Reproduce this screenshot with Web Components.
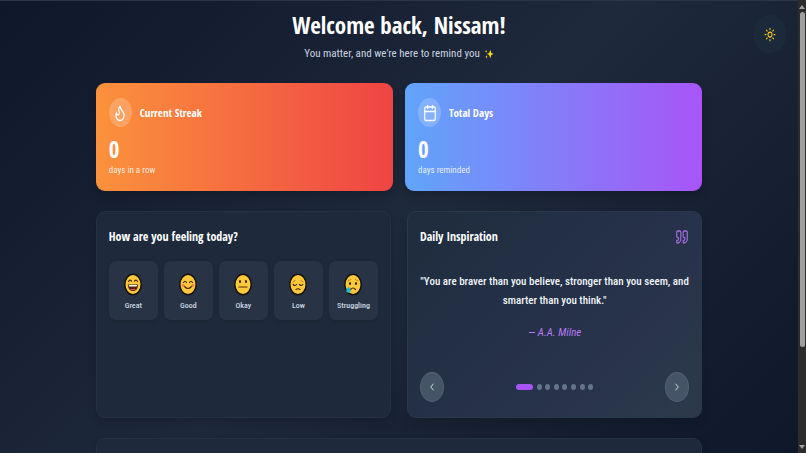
<!DOCTYPE html>
<html lang="en">
<head>
<meta charset="utf-8">
<title>Welcome back</title>
<style>
  :root {
    --font-heading: "Open Sans Condensed", "Roboto Condensed", Lato, sans-serif;
    --font-body: "Roboto Condensed", Lato, sans-serif;
  }

  body {
    margin: 0;
    background: #0f172a;
    color: #fff;
    font-family: var(--font-body);
  }
</style>
</head>
<body>

<app-shell>
  <theme-toggle></theme-toggle>
  <page-header heading="Welcome back, Nissam!">You matter, and we're here to remind you</page-header>
  <stat-row>
    <stat-card icon="flame" heading="Current Streak" value="0" from="#fb923c" to="#ef4444">days in a row</stat-card>
    <stat-card icon="calendar" heading="Total Days" value="0" from="#60a5fa" to="#a855f7">days reminded</stat-card>
  </stat-row>
  <panel-row>
    <glass-panel heading="How are you feeling today?">
      <mood-picker>
        <mood-button mood="great">Great</mood-button>
        <mood-button mood="good">Good</mood-button>
        <mood-button mood="okay">Okay</mood-button>
        <mood-button mood="low">Low</mood-button>
        <mood-button mood="struggling">Struggling</mood-button>
      </mood-picker>
    </glass-panel>
    <glass-panel heading="Daily Inspiration" tone="bright">
      <ui-icon slot="action" name="quote"></ui-icon>
      <quote-carousel author="A.A. Milne" count="8">"You are braver than you believe, stronger than you seem, and smarter than you think."</quote-carousel>
    </glass-panel>
  </panel-row>
  <glass-panel></glass-panel>
</app-shell>

<script>
const ICONS = {
  flame: '<path d="M8.5 14.5A2.5 2.5 0 0 0 11 12c0-1.38-.5-2-1-3-1.072-2.143-.224-4.054 2-6 .5 2.5 2 4.9 4 6.5 2 1.6 3 3.5 3 5.5a7 7 0 1 1-14 0c0-1.153.433-2.294 1-3a2.5 2.5 0 0 0 2.5 2.5z"/>',
  calendar: '<path d="M8 2v4M16 2v4M3 10h18"/><rect x="3" y="4" width="18" height="18" rx="2"/>',
  quote: '<path d="M16 3a2 2 0 0 0-2 2v6a2 2 0 0 0 2 2 1 1 0 0 1 1 1v1a2 2 0 0 1-2 2 1 1 0 0 0-1 1v2a1 1 0 0 0 1 1 6 6 0 0 0 6-6V5a2 2 0 0 0-2-2z"/><path d="M5 3a2 2 0 0 0-2 2v6a2 2 0 0 0 2 2 1 1 0 0 1 1 1v1a2 2 0 0 1-2 2 1 1 0 0 0-1 1v2a1 1 0 0 0 1 1 6 6 0 0 0 6-6V5a2 2 0 0 0-2-2z"/>',
  sun: '<circle cx="12" cy="12" r="4"/><path d="M12 2v2M12 20v2M4.93 4.93l1.41 1.41M17.66 17.66l1.41 1.41M2 12h2M20 12h2M6.34 17.66l-1.41 1.41M19.07 4.93l-1.41 1.41"/>',
  left: '<path d="m15 18-6-6 6-6"/>',
  right: '<path d="m9 18 6-6-6-6"/>',
  sparkles: '<g fill="#fadc15" stroke="none"><path d="M15 2l2.600 7.400L23 12l-5.400 2.600L15 22l-2.600-7.400L7 12l5.400-2.600z"/><path d="M5 2l.9 2.600L8 5.500l-2.100.9L5 9l-.9-2.600L2 5.500l2.100-.9z"/><path d="M6 15l1 3 2 1-2 1-1 3-1-3-2-1 2-1z"/></g>'
};

const FACES = {
  great: '<path d="M4.500 8.500q1.500-2.500 3-.3M10.500 8.200q1.500-2.200 3 .3" /><path d="M4.500 12h9q-.5 5.500-4.500 5.500T4.500 12z" fill="#5b1d12"/><path d="M5.500 12.800h7" stroke="#fff" stroke-width="1.500"/><path d="M7 16.500h4" stroke="#ef5350"/>',
  good: '<path d="M4.500 9.500q1.500-2.500 3 0M10.500 9.500q1.500-2.500 3 0M5.500 13.500q3.500 4 7 0"/><g fill="#f97355" stroke="none"><ellipse cx="4.200" cy="12.500" rx="1.600" ry="1.300"/><ellipse cx="13.800" cy="12.500" rx="1.600" ry="1.300"/></g>',
  okay: '<g fill="#2b1a0b" stroke="none"><ellipse cx="6" cy="8.500" rx="1" ry="1.500"/><ellipse cx="12" cy="8.500" rx="1" ry="1.500"/></g><path d="M5 14h8"/>',
  low: '<path d="M3.800 9l2.500-1.500M14.200 9l-2.500-1.500" stroke="#b86b12" stroke-width=".8"/><path d="M4.200 11.500q1.700 2 3.300 0M10.500 11.500q1.700 2 3.300 0M7 16.500q2-1.500 4 0"/>',
  struggling: '<path d="M4 8l2.500-1.500M14 8l-2.500-1.500" stroke="#b86b12" stroke-width=".8"/><g fill="#2b1a0b" stroke="none"><ellipse cx="6" cy="10.500" rx="1" ry="1.500"/><ellipse cx="12" cy="10.500" rx="1" ry="1.500"/></g><path d="M6.500 16.500q2.500-3 5 0"/><path d="M4.500 13.500q3.500 4 1.500 5.800-1.800 1.200-3.500-.3-1.300-1.500 2-5.500z" fill="#22b8cf" stroke="none"/>'
};

class BaseElement extends HTMLElement {
  connectedCallback() {
    if (this.shadowRoot) {
      return;
    }
    const root = this.attachShadow({ mode: 'open' });
    const template = document.createElement('template');
    template.innerHTML = `<style>* { box-sizing: border-box; }</style>${this.render()}`;
    root.appendChild(template.content.cloneNode(true));
  }

  attr(name) {
    return this.getAttribute(name) || '';
  }
}

class UiIcon extends BaseElement {
  render() {
    return `
<style>
  :host {
    display: block;
    width: 12px;
    height: 14px;
  }

  svg {
    display: block;
    width: 100%;
    height: 100%;
  }
</style>
<svg viewBox="0 0 24 24" preserveAspectRatio="none" fill="none" stroke="currentColor" stroke-width="2" stroke-linecap="round" stroke-linejoin="round" aria-hidden="true">${ICONS[this.attr('name')]}</svg>`;
  }
}

class AppShell extends BaseElement {
  render() {
    return `
<style>
  :host {
    display: grid;
    grid-template-columns: 1fr 8px;
    height: 100vh;
    overflow: hidden;
  }

  .view {
    overflow: hidden;
    padding: 10px 12% 0;
    border-top: 1px solid #2a3546;
    background: linear-gradient(135deg, #0f172a, #1e293b 50%, #0f172a);
  }

  .content {
    display: flex;
    flex-direction: column;
    gap: 20px;
  }

  .scrollbar {
    display: flex;
    flex-direction: column;
    align-items: center;
    gap: 3px;
    padding: 5px 0 4px;
    background: #2c2c2c;
  }

  .arrow {
    border: 3px solid transparent;
    border-top: 0;
    border-bottom: 4px solid #a0a0a0;
  }

  .arrow--down {
    border-top: 4px solid #a0a0a0;
    border-bottom: 0;
  }

  .track {
    flex: 1;
    width: 5px;
  }

  .thumb {
    height: 78%;
    border-radius: 3px;
    background: #9f9f9f;
  }
</style>
<div class="view">
  <main class="content"><slot></slot></main>
</div>
<div class="scrollbar" aria-hidden="true">
  <span class="arrow"></span>
  <div class="track"><div class="thumb"></div></div>
  <span class="arrow arrow--down"></span>
</div>`;
  }
}

class ThemeToggle extends BaseElement {
  render() {
    return `
<style>
  :host {
    position: fixed;
    top: 15px;
    right: 20px;
  }

  button {
    display: grid;
    place-items: center;
    width: 32px;
    height: 38px;
    padding: 0;
    border: 1px solid #1f2c3e;
    border-radius: 50%;
    background: #1c293b;
    color: #facc15;
  }

  ui-icon {
    height: 15px;
  }
</style>
<button type="button" aria-label="Toggle theme"><ui-icon name="sun"></ui-icon></button>`;
  }
}

class PageHeader extends BaseElement {
  render() {
    return `
<style>
  :host {
    display: block;
    margin-bottom: 1px;
    text-align: center;
  }

  h1 {
    margin: 0 0 6px;
    font-family: var(--font-heading);
    font-size: 23px;
    line-height: 29px;
  }

  p {
    display: flex;
    justify-content: center;
    align-items: center;
    gap: 4px;
    margin: 0;
    color: #cbd5e1;
    font-size: 11px;
    line-height: 16px;
  }

  ui-icon {
    width: 10px;
    height: 10px;
  }
</style>
<h1>${this.attr('heading')}</h1>
<p><slot></slot><ui-icon name="sparkles"></ui-icon></p>`;
  }
}

class StatRow extends BaseElement {
  render() {
    return `
<style>
  :host {
    display: grid;
    grid-template-columns: 1fr 1fr;
    gap: 12px;
  }
</style>
<slot></slot>`;
  }
}

class StatCard extends BaseElement {
  render() {
    return `
<style>
  :host {
    display: block;
    padding: 15px 13px 14px;
    border-radius: 9px;
    background: linear-gradient(to right, ${this.attr('from')}, ${this.attr('to')});
    box-shadow: 0 5px 9px rgba(0, 0, 0, .2);
  }

  .top {
    display: flex;
    align-items: center;
    gap: 8px;
  }

  .badge {
    display: grid;
    place-items: center;
    width: 23px;
    height: 29px;
    border-radius: 50%;
    background: rgba(255, 255, 255, .2);
  }

  .badge ui-icon {
    width: 14px;
    height: 18px;
  }

  h2 {
    margin: 0;
    font-family: var(--font-heading);
    font-size: 11px;
    line-height: 16px;
  }

  .value {
    margin: 8px 0 0;
    font-family: var(--font-heading);
    font-size: 23px;
    font-weight: 700;
    line-height: 28px;
  }

  .unit {
    margin: 0;
    color: rgba(255, 255, 255, .85);
    font-size: 9px;
    line-height: 14px;
  }
</style>
<div class="top">
  <span class="badge"><ui-icon name="${this.attr('icon')}"></ui-icon></span>
  <h2>${this.attr('heading')}</h2>
</div>
<p class="value">${this.attr('value')}</p>
<p class="unit"><slot></slot></p>`;
  }
}

class PanelRow extends BaseElement {
  render() {
    return `
<style>
  :host {
    display: grid;
    grid-template-columns: 1fr 1fr;
    gap: 16px;
  }
</style>
<slot></slot>`;
  }
}

class GlassPanel extends BaseElement {
  render() {
    const bright = this.attr('tone') === 'bright';
    return `
<style>
  :host {
    display: flex;
    flex-direction: column;
    gap: 14px;
    min-height: 40px;
    padding: 15px 12px;
    border: 1px solid ${bright ? '#2a384a' : '#243143'};
    border-radius: 9px;
    background: ${bright ? 'linear-gradient(135deg, #1f2c3d, #27324b 60%, #2d394b)' : '#1e2a3b'};
    box-shadow: 0 5px 9px rgba(0, 0, 0, .15);
  }

  header {
    display: flex;
    justify-content: space-between;
    align-items: center;
  }

  h2 {
    margin: 0;
    font-family: var(--font-heading);
    font-size: 12px;
    line-height: 20px;
  }

  ::slotted(ui-icon) {
    width: 14px;
    height: 16px;
    color: #a66ee0;
  }
</style>
${this.attr('heading') ? `<header><h2>${this.attr('heading')}</h2><slot name="action"></slot></header>` : ''}
<slot></slot>`;
  }
}

class MoodPicker extends BaseElement {
  render() {
    return `
<style>
  :host {
    display: grid;
    grid-template-columns: repeat(5, 1fr);
    gap: 6px;
  }
</style>
<slot></slot>`;
  }
}

class MoodButton extends BaseElement {
  render() {
    return `
<style>
  :host {
    display: block;
  }

  button {
    display: flex;
    flex-direction: column;
    align-items: center;
    gap: 4px;
    width: 100%;
    padding: 12px 0 8px;
    border: 0;
    border-radius: 7px;
    background: #283446;
    color: #cbd5e1;
    font: 500 8px/12px var(--font-body);
    box-shadow: 0 1px 3px rgba(0, 0, 0, .15);
  }

  svg {
    width: 18px;
    height: 23px;
  }
</style>
<button type="button">
  <svg viewBox="0 0 18 23" aria-hidden="true">
    <ellipse cx="9" cy="11.500" rx="8.200" ry="10.200" fill="#fcc93a" stroke="#16120c" stroke-width="1.500"/>
    <g fill="none" stroke="#4a2a0c" stroke-width="1.200" stroke-linecap="round">${FACES[this.attr('mood')]}</g>
  </svg>
  <slot></slot>
</button>`;
  }
}

class QuoteCarousel extends BaseElement {
  render() {
    const dots = Array.from({ length: +this.attr('count') }, (_, idx) =>
      `<button type="button" class="dot${idx === 0 ? ' dot--active' : ''}" aria-label="Quote ${idx + 1}"></button>`).join('');
    return `
<style>
  :host {
    display: block;
  }

  blockquote {
    margin: 11px 0 0;
    color: #f1f5f9;
    font-size: 11px;
    font-weight: 500;
    line-height: 19px;
    text-align: center;
  }

  .author {
    margin: 14px 0 30px;
    color: #b57bee;
    font-size: 11px;
    font-style: italic;
    line-height: 18px;
    text-align: center;
  }

  .controls {
    display: flex;
    justify-content: space-between;
    align-items: center;
  }

  button {
    padding: 0;
    border: 0;
  }

  .nav {
    display: grid;
    place-items: center;
    width: 24px;
    height: 30px;
    border: 1px solid #536073;
    border-radius: 50%;
    background: #465467;
    color: #dbe2ea;
  }

  .nav ui-icon {
    width: 10px;
    height: 12px;
  }

  .dots {
    display: flex;
    justify-content: space-between;
    align-items: center;
    width: 77px;
  }

  .dot {
    width: 5px;
    height: 6px;
    border-radius: 50%;
    background: #64748b;
  }

  .dot--active {
    width: 17px;
    border-radius: 3px;
    background: #a855f7;
  }
</style>
<blockquote><slot></slot></blockquote>
<p class="author">— ${this.attr('author')}</p>
<div class="controls">
  <button type="button" class="nav" aria-label="Previous quote"><ui-icon name="left"></ui-icon></button>
  <div class="dots">${dots}</div>
  <button type="button" class="nav" aria-label="Next quote"><ui-icon name="right"></ui-icon></button>
</div>`;
  }
}

window.customElements.define('ui-icon', UiIcon);
window.customElements.define('app-shell', AppShell);
window.customElements.define('theme-toggle', ThemeToggle);
window.customElements.define('page-header', PageHeader);
window.customElements.define('stat-row', StatRow);
window.customElements.define('stat-card', StatCard);
window.customElements.define('panel-row', PanelRow);
window.customElements.define('glass-panel', GlassPanel);
window.customElements.define('mood-picker', MoodPicker);
window.customElements.define('mood-button', MoodButton);
window.customElements.define('quote-carousel', QuoteCarousel);
</script>
</body>
</html>
